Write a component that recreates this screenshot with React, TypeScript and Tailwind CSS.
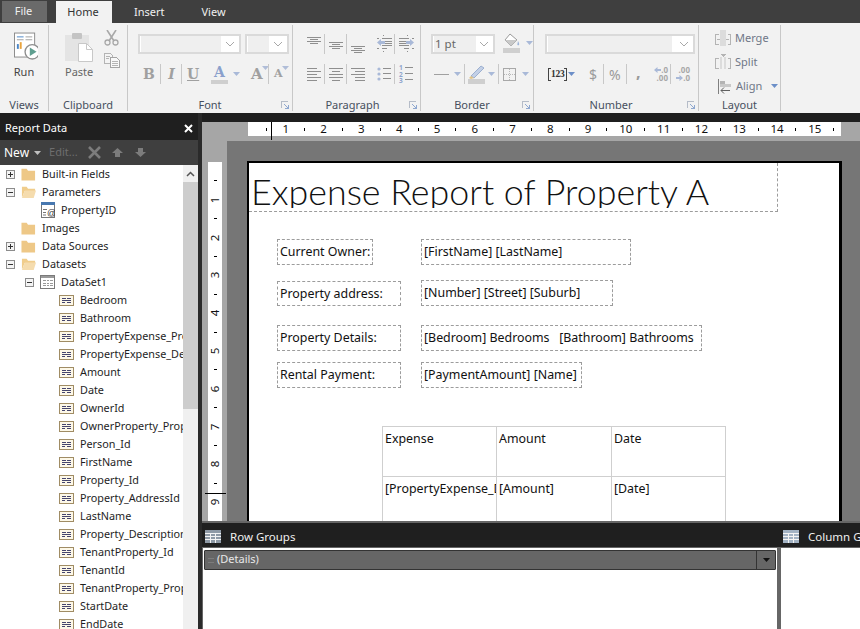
const fields = [
  "Bedroom",
  "Bathroom",
  "PropertyExpense_Property",
  "PropertyExpense_Description",
  "Amount",
  "Date",
  "OwnerId",
  "OwnerProperty_Property",
  "Person_Id",
  "FirstName",
  "Property_Id",
  "Property_AddressId",
  "LastName",
  "Property_Description",
  "TenantProperty_Id",
  "TenantId",
  "TenantProperty_Property",
  "StartDate",
  "EndDate",
];

const BLUE = "#a9b9d8";

// stacked 1px lines, used by the alignment / list buttons
function Lines({ rows, top, step = 2, w = 14 }: { rows: number[][]; top: number; step?: number; w?: number }) {
  return (
    <svg width={w} height={20} shapeRendering="crispEdges" className="shrink-0">
      {rows.map(([x, len], i) => (
        <rect key={i} x={x} y={top + i * step} width={len} height={1} fill="#8f8f8f" />
      ))}
    </svg>
  );
}

function Sep() {
  return <div className="w-px h-5 bg-[#c8c8c8] shrink-0" />;
}

function Caret({ color = BLUE }: { color?: string }) {
  return (
    <svg width={7} height={4} className="shrink-0">
      <path d="M0 0h7L3.5 4z" fill={color} />
    </svg>
  );
}

function Combo({ width, fill, children }: { width: string; fill: string; children?: React.ReactNode }) {
  return (
    <div className={`${width} h-5 shrink-0 bg-white border-2 border-[#dadada] flex items-center`}>
      <div className={`${fill} h-4 bg-[#efefef] ml-px text-[11.5px] leading-4 pl-px text-[#666]`}>{children}</div>
      <svg width={10} height={6} className="ml-auto mr-1 shrink-0">
        <path d="M1 1l4 4 4-4" fill="none" stroke="#a8a8a8" />
      </svg>
    </div>
  );
}

function Launcher() {
  return (
    <svg width={8} height={8} className="justify-self-end mr-[3px] self-center" shapeRendering="crispEdges">
      <path d="M0.5 7V0.5H7" fill="none" stroke="#b5bcc8" />
      <path d="M3 3l4 4M7 4v3H4" fill="none" stroke="#8fa8d0" />
    </svg>
  );
}

function Group({ width, label, labelPad = "", launcher, children }: { width: string; label: string; labelPad?: string; launcher?: boolean; children: React.ReactNode }) {
  return (
    <div className={`${width} shrink-0 my-[2px] border-r border-[#c8c8c8] flex flex-col`}>
      <div className="flex-1 min-h-0 pt-[9px]">{children}</div>
      <div className="grid grid-cols-[1fr_auto_1fr] h-[13px] text-[11px] leading-[13px] text-[#47505e]">
        <div />
        <div className={labelPad}>{label}</div>
        {launcher ? <Launcher /> : <div />}
      </div>
    </div>
  );
}

function RunIcon() {
  return (
    <svg width={24} height={28} viewBox="0 0 25 28" className="shrink-0">
      <rect x={0.5} y={0.5} width={21} height={25} fill="#fff" stroke="#8a8a8a" />
      <path d="M3 4.5h7" stroke="#4a86c8" />
      <path d="M3 7.5h7M12 4.5h7M12 7.5h7" stroke="#a0a0a0" />
      <rect x={3} y={12} width={2} height={5} fill="#4a86c8" />
      <rect x={6} y={10} width={2} height={7} fill="#e8a33d" />
      <circle cx={19} cy={20} r={7.5} fill="#fff" stroke="#8e8e8e" strokeWidth={1.4} />
      <path d="M16.5 15.5l7 4.5-7 4.5z" fill="#5f9f90" />
    </svg>
  );
}

function PasteIcon() {
  return (
    <svg width={29} height={30} viewBox="0 0 29 30" className="shrink-0">
      <rect x={0} y={3} width={24} height={26} fill="#e4e4e4" />
      <rect x={7} y={1} width={10} height={6} rx={1} fill="#c4c4c4" />
      <path d="M13.5 11.5h8l6 6v12h-14z" fill="#fff" stroke="#c8c8c8" />
      <path d="M21.5 11.5v6h6" fill="none" stroke="#c8c8c8" />
    </svg>
  );
}

function Scissors() {
  return (
    <svg width={15} height={16} viewBox="0 0 15 16" className="shrink-0">
      <path d="M3 0l7 11M12 0L5 11" stroke="#a8a8a8" strokeWidth={1.6} fill="none" />
      <circle cx={3.5} cy={12.5} r={2.5} fill="none" stroke="#a8a8a8" strokeWidth={1.3} />
      <circle cx={11.5} cy={12.5} r={2.5} fill="none" stroke="#a8a8a8" strokeWidth={1.3} />
    </svg>
  );
}

function CopyIcon() {
  return (
    <svg width={16} height={15} viewBox="0 0 16 15" className="shrink-0" shapeRendering="crispEdges">
      <path d="M0.5 0.5h6l2 2v8h-8z" fill="#f4f4f4" stroke="#b4b4b4" />
      <path d="M6.5 4.5h6l3 3v7h-9z" fill="#f8f8f8" stroke="#a4a4a4" />
      <path d="M2 3.5h4M2 5.5h3M8 8.5h6M8 10.5h6M8 12.5h6" stroke="#b4b4b4" />
    </svg>
  );
}

function FillIcon() {
  return (
    <svg width={17} height={20} viewBox="0 0 17 20" className="shrink-0">
      <path d="M7 1l7 6-6 6-6-6z" fill="#fff" stroke="#9a9a9a" />
      <path d="M2 7l6 6 6-6z" fill="#c9c9c9" />
      <path d="M15 8c1 2 1.6 3 1 4-.7.7-2 0-1.6-1z" fill="#9db4d8" />
      <rect x={0} y={15} width={17} height={5} fill="#cfcfcf" />
    </svg>
  );
}

function PenIcon() {
  return (
    <svg width={17} height={20} viewBox="0 0 17 20" className="shrink-0">
      <path d="M3 12L13 2l3 2L6 14z" fill="#c3d0e6" stroke="#9db0d0" />
      <path d="M1 14l2-2 3 2-3 1z" fill="#e2c486" />
      <rect x={0} y={15} width={17} height={5} fill="#cfcfcf" />
    </svg>
  );
}

function BoxIcon() {
  return (
    <svg width={13} height={13} viewBox="0 0 13 13" className="shrink-0" shapeRendering="crispEdges">
      <rect x={0.5} y={0.5} width={12} height={12} fill="none" stroke="#a8a8a8" />
      <path d="M6.5 1v11M1 6.5h11" stroke="#b8b8b8" strokeDasharray="1 1" />
    </svg>
  );
}

function IndentIcon({ flip }: { flip?: boolean }) {
  return (
    <svg width={16} height={20} viewBox="0 0 16 20" className="shrink-0" shapeRendering="crispEdges">
      <g transform={flip ? "translate(16 0) scale(-1 1)" : undefined}>
        <rect x={6} y={1} width={1} height={1} fill="#8f8f8f" />
        <rect x={6} y={17} width={1} height={1} fill="#8f8f8f" />
        <path d="M0 4h2v1H0zM5 4h10v1H5zM5 7h10v1H5zM5 9h10v1H5zM5 11h10v1H5zM0 14h2v1H0zM5 14h5v1H5z" fill="#8f8f8f" />
        <path d="M0 8.5L4 5v2h4v3H4v2z" fill={BLUE} shapeRendering="auto" />
      </g>
    </svg>
  );
}

function BulletIcon() {
  return (
    <svg width={14} height={20} viewBox="0 0 14 20" className="shrink-0">
      <circle cx={2} cy={5} r={1.6} fill={BLUE} />
      <circle cx={2} cy={10} r={1.6} fill={BLUE} />
      <circle cx={2} cy={15} r={1.6} fill={BLUE} />
      <path d="M6 4.5h8M6 9.5h8M6 14.5h8" stroke="#8f8f8f" />
    </svg>
  );
}

function NumberedIcon() {
  return (
    <div className="w-[14px] h-5 flex shrink-0">
      <div className="w-[5px] flex flex-col text-[6.5px] leading-[6.5px] text-[#8ea4cc] font-bold pt-[1px]">
        <span>1</span>
        <span>2</span>
        <span>3</span>
      </div>
      <svg width={9} height={20} className="shrink-0">
        <path d="M1 3.5h8M1 9.5h8M1 15.5h8" stroke="#8f8f8f" />
      </svg>
    </div>
  );
}

function MergeIcon({ split }: { split?: boolean }) {
  return (
    <svg width={16} height={16} viewBox="0 0 16 16" className="shrink-0" shapeRendering="crispEdges">
      <path d="M3.5 4.5h-3v10h3M12.5 4.5h3v10h-3" fill="none" stroke="#b4b4b4" />
      {split ? (
        <>
          <rect x={5} y={3} width={2} height={12} fill="#dcdcdc" />
          <rect x={9} y={3} width={2} height={12} fill="#dcdcdc" />
          <path d="M5 0h6L8 3z" fill="#b4b4b4" />
        </>
      ) : (
        <>
          <rect x={5} y={0} width={6} height={16} fill="#dcdcdc" />
          <path d="M2 9h3M11 9h3" stroke="#b4b4b4" />
        </>
      )}
    </svg>
  );
}

function AlignIcon() {
  return (
    <svg width={13} height={15} viewBox="0 0 13 15" className="shrink-0">
      <path d="M0.5 0v15" stroke="#808080" />
      <rect x={2} y={2} width={5} height={3} fill="#b4b4b4" />
      <rect x={2} y={5} width={11} height={3} fill="#c8c8c8" />
      <path d="M12 11.5H3M6 8.5l-3 3 3 3" fill="none" stroke="#606060" />
    </svg>
  );
}

function Bracket({ flip }: { flip?: boolean }) {
  return (
    <svg width={3} height={13} className="shrink-0" shapeRendering="crispEdges">
      <path d={flip ? "M0 0.5h2.5v12H0" : "M3 0.5H0.5v12H3"} fill="none" stroke="#444" />
    </svg>
  );
}

function DecimalIcon({ flip }: { flip?: boolean }) {
  const arrow = (
    <svg width={7} height={6} className="shrink-0">
      <path d={flip ? "M7 3L3.5 0v2H0v2h3.5v2z" : "M0 3l3.5-3v2H7v2H3.5v2z"} fill={BLUE} />
    </svg>
  );
  return (
    <div className="w-[15px] h-5 flex flex-col items-end justify-center text-[8px] leading-[8px] font-bold text-[#a8a8a8] shrink-0 whitespace-nowrap">
      {flip ? <span>.00</span> : <span className="flex items-center">{arrow}.0</span>}
      {flip ? <span className="flex items-center">{arrow}.0</span> : <span>.00</span>}
    </div>
  );
}

function Ribbon() {
  return (
    <div className="h-[90px] shrink-0 bg-[#f2f2f2] flex">
      <Group width="w-[49px]" label="Views">
        <div className="flex flex-col items-center -mt-[2px]">
          <div className="ml-[3px]"><RunIcon /></div>
          <div className="text-[11px] leading-[14px] mt-[5px] text-[#444]">Run</div>
        </div>
      </Group>
      <Group width="w-[79px]" label="Clipboard">
        <div className="flex -mt-[2px] pl-[16px]">
          <div className="flex flex-col items-start">
            <PasteIcon />
            <div className="text-[11px] leading-[14px] text-[#666] mt-[3px]">Paste</div>
          </div>
          <div className="flex flex-col ml-[10px] -mt-[2px] gap-[7px]">
            <Scissors />
            <CopyIcon />
          </div>
        </div>
      </Group>
      <Group width="w-[165px]" label="Font" launcher>
        <div className="pl-[10px]">
          <div className="flex gap-[4px]">
            <Combo width="w-[103px]" fill="w-[80px]" />
            <Combo width="w-[44px]" fill="w-[21px]" />
          </div>
          <div className="flex items-center h-5 mt-[10px] text-[#a0a0a0] font-bold text-[14px] leading-5 [font-family:'DejaVu_Serif',serif]">
            <span className="w-[11px] ml-[5px] text-center">B</span>
            <div className="ml-[6px]"><Sep /></div>
            <span className="w-[11px] ml-[5px] text-center italic">I</span>
            <div className="ml-[4px]"><Sep /></div>
            <span className="w-[11px] ml-[5px] text-center underline">U</span>
            <div className="flex flex-col items-center w-[17px] ml-[13px]">
              <span className="text-[14px] leading-[15px] text-[#8aa0cc]">A</span>
              <div className="w-[17px] h-[4px] bg-[#cfcfcf]" />
            </div>
            <div className="ml-[5px]"><Caret /></div>
            <span className="ml-[11px] w-[11px] text-center text-[15px]">A</span>
            <div className="-mt-[12px]"><Caret color="#b0bdd8" /></div>
            <div className="ml-[-1px] mr-[3px]"><Sep /></div>
            <span className="ml-[2px] w-[8px] text-center text-[11px]">A</span>
            <div className="-mt-[12px]"><Caret color="#b0bdd8" /></div>
          </div>
        </div>
      </Group>
      <Group width="w-[128px]" label="Paragraph" labelPad="pr-[8px]" launcher>
        <div className="flex ml-[14px]">
          <Lines top={3} rows={[[0, 14], [3, 8], [0, 14], [3, 8]]} />
          <div className="ml-[3px]"><Sep /></div>
          <div className="ml-[4px]"><Lines top={8} rows={[[0, 14], [3, 8], [0, 14], [3, 8]]} /></div>
          <div className="ml-[3px]"><Sep /></div>
          <div className="ml-[4px]"><Lines top={12} rows={[[0, 14], [3, 8], [0, 14], [3, 8]]} /></div>
          <div className="ml-[12px]"><IndentIcon /></div>
          <div className="ml-[1px]"><Sep /></div>
          <div className="ml-[3px]"><IndentIcon flip /></div>
        </div>
        <div className="flex ml-[14px] mt-[10px]">
          <Lines top={4} step={3} rows={[[0, 10], [0, 14], [0, 10], [0, 14], [0, 10]]} />
          <div className="ml-[3px]"><Sep /></div>
          <div className="ml-[4px]"><Lines top={4} step={3} rows={[[0, 14], [3, 8], [0, 14], [0, 14], [3, 8]]} /></div>
          <div className="ml-[3px]"><Sep /></div>
          <div className="ml-[4px]"><Lines top={4} step={3} rows={[[0, 14], [4, 10], [0, 14], [4, 10], [4, 10]]} /></div>
          <div className="ml-[12px]"><BulletIcon /></div>
          <div className="ml-[3px]"><Sep /></div>
          <div className="ml-[4px]"><NumberedIcon /></div>
        </div>
      </Group>
      <Group width="w-[113px]" label="Border" labelPad="pr-[10px]" launcher>
        <div className="pl-[10px] flex">
          <Combo width="w-[64px]" fill="w-[42px]">1 pt</Combo>
          <div className="ml-[8px] -mt-px"><FillIcon /></div>
          <div className="ml-[6px] mt-[7px]"><Caret /></div>
        </div>
        <div className="pl-[13px] mt-[10px] flex items-center h-5">
          <div className="w-[15px] h-px bg-[#a0a0a0]" />
          <div className="ml-[5px]"><Caret /></div>
          <div className="ml-[3px] mr-[3px]"><Sep /></div>
          <PenIcon />
          <div className="ml-[3px]"><Caret /></div>
          <div className="ml-[3px]"><Sep /></div>
          <div className="ml-[4px]"><BoxIcon /></div>
          <div className="ml-[6px]"><Caret /></div>
        </div>
      </Group>
      <Group width="w-[165px]" label="Number" labelPad="pr-[10px]" launcher>
        <div className="pl-[11px]">
          <Combo width="w-[150px]" fill="w-[124px]" />
          <div className="flex items-center h-5 mt-[10px] text-[#9a9a9a]">
            <div className="ml-[3px] w-[17px] flex items-center justify-between text-[9.5px] font-bold text-[#333] tracking-[-0.3px] [font-family:'Liberation_Serif',serif]">
              <Bracket />123<Bracket flip />
            </div>
            <div className="ml-[3px]"><Caret color="#6c8fc8" /></div>
            <span className="ml-[14px] w-[9px] text-[14px]">$</span>
            <div className="ml-[5px]"><Sep /></div>
            <span className="ml-[5px] w-[12px] text-[14px]">%</span>
            <div className="ml-[5px]"><Sep /></div>
            <span className="ml-[9px] w-[4px] text-[16px] font-bold leading-4 -mt-1">,</span>
            <div className="ml-[13px]"><DecimalIcon /></div>
            <div className="ml-[2px]"><Sep /></div>
            <div className="ml-[4px]"><DecimalIcon flip /></div>
          </div>
        </div>
      </Group>
      <Group width="w-[82px]" label="Layout">
        <div className="-mt-[4px] flex flex-col text-[11px] leading-4 text-[#6f7787]">
          <div className="flex items-center h-4 pl-[16px] gap-[4px]"><MergeIcon />Merge</div>
          <div className="flex items-center h-4 pl-[16px] gap-[4px] mt-[8px]"><MergeIcon split />Split</div>
          <div className="flex items-center h-4 pl-[19px] gap-[5px] mt-[8px]">
            <AlignIcon />Align
            <div className="ml-[4px]"><Caret color="#6c8fc8" /></div>
          </div>
        </div>
      </Group>
    </div>
  );
}

function Expander({ open }: { open: boolean }) {
  return (
    <svg width={9} height={9} shapeRendering="crispEdges" className="shrink-0">
      <rect x={0.5} y={0.5} width={8} height={8} fill="#f4f4f4" stroke="#8c8c8c" />
      <path d="M2 4.5h5" stroke="#333" />
      {!open && <path d="M4.5 2v5" stroke="#333" />}
    </svg>
  );
}

function Folder({ open }: { open?: boolean }) {
  return (
    <svg width={15} height={14} viewBox="0 0 16 14" className="shrink-0">
      {open ? (
        <>
          <path d="M1 13V1.5h5l1.5 2H15V6H4z" fill="#f0cd8c" />
          <path d="M1 13.5L4 5.5h12l-2.5 8z" fill="#f5dcae" />
        </>
      ) : (
        <path d="M0.5 14V1.5h5.5l1.5 2H15V14z" fill="#eec887" />
      )}
    </svg>
  );
}

function ParamIcon() {
  return (
    <svg width={14} height={16} viewBox="0 0 14 16" className="shrink-0">
      <rect x={0.5} y={0.5} width={13} height={15} fill="#fff" stroke="#777" />
      <rect x={0} y={0} width={14} height={3} fill="#4878b0" />
      <path d="M2 7.5h4M2 10.5h3M2 13h3" stroke="#777" />
      <text x={6} y={14} fontSize={9} fill="#333" fontFamily="'Liberation Sans', sans-serif">@</text>
    </svg>
  );
}

function DatasetIcon() {
  return (
    <svg width={15} height={14} viewBox="0 0 15 14" className="shrink-0" shapeRendering="crispEdges">
      <rect x={0.5} y={0.5} width={14} height={13} fill="#fff" stroke="#7a7a7a" />
      <rect x={1} y={1} width={13} height={2} fill="#9a9a9a" />
      <path d="M3 5.5h3M7 5.5h2M10 5.5h3M3 8h3M7 8h2M10 8h3M3 10.5h3M7 10.5h2M10 10.5h3" stroke="#9a9a9a" />
    </svg>
  );
}

function FieldIcon() {
  return (
    <svg width={15} height={11} viewBox="0 0 15 11" className="shrink-0" shapeRendering="crispEdges">
      <rect x={0.5} y={0.5} width={14} height={10} fill="#fdf8e8" stroke="#a08c64" />
      <path d="M3 3.5h4M8 3.5h4M3 5.5h9M3 7.5h3M8 7.5h4" stroke="#45456e" />
    </svg>
  );
}

function TreeRow({ pad, expander, gap, icon, label }: { pad: string; expander?: "open" | "closed"; gap: string; icon: React.ReactNode; label: string }) {
  return (
    <div className={`h-[18px] flex items-center ${pad} whitespace-nowrap`}>
      {expander ? <Expander open={expander === "open"} /> : null}
      <div className={`${gap} shrink-0 flex items-center`}>{icon}</div>
      <span className="ml-[6px] text-[10.8px] leading-[18px] text-[#1e1e1e]">{label}</span>
    </div>
  );
}

function ReportData() {
  return (
    <div className="w-[198px] shrink-0 flex flex-col">
      <div className="h-[27px] shrink-0 flex items-center justify-between pl-[5px] pr-[5px] pt-[4px] text-white text-[11px]">
        <span>Report Data</span>
        <svg width={9} height={9}>
          <path d="M1 1l7 7M8 1L1 8" stroke="#fff" strokeWidth={2} />
        </svg>
      </div>
      <div className="h-[25px] shrink-0 bg-[#3f3f3f] flex items-center pl-[4px] text-[12px]">
        <span className="text-white">New</span>
        <div className="ml-[5px]"><Caret color="#c0c0c0" /></div>
        <span className="ml-[8px] text-[#6e6e6e] text-[11px]">Edit...</span>
        <svg width={13} height={13} className="ml-[10px]">
          <path d="M1 1l11 11M12 1L1 12" stroke="#7c7c7c" strokeWidth={2.6} />
        </svg>
        <svg width={11} height={11} className="ml-[11px]">
          <path d="M5.5 1L11 6H8v4H3V6H0z" fill="#7c7c7c" />
        </svg>
        <svg width={11} height={11} className="ml-[12px]">
          <path d="M5.5 10L11 5H8V1H3v4H0z" fill="#7c7c7c" />
        </svg>
      </div>
      <div className="flex-1 min-h-0 flex bg-white overflow-hidden">
        <div className="w-[183px] shrink-0 overflow-hidden">
          <TreeRow pad="pl-[6px]" expander="closed" gap="ml-[6px]" icon={<Folder />} label="Built-in Fields" />
          <TreeRow pad="pl-[6px]" expander="open" gap="ml-[6px]" icon={<Folder open />} label="Parameters" />
          <TreeRow pad="pl-[41px]" gap="" icon={<ParamIcon />} label="PropertyID" />
          <TreeRow pad="pl-[21px]" gap="" icon={<Folder />} label="Images" />
          <TreeRow pad="pl-[6px]" expander="closed" gap="ml-[6px]" icon={<Folder />} label="Data Sources" />
          <TreeRow pad="pl-[6px]" expander="open" gap="ml-[6px]" icon={<Folder open />} label="Datasets" />
          <TreeRow pad="pl-[25px]" expander="open" gap="ml-[6px]" icon={<DatasetIcon />} label="DataSet1" />
          {fields.map((f) => (
            <TreeRow key={f} pad="pl-[59px]" gap="" icon={<FieldIcon />} label={f} />
          ))}
        </div>
        <div className="w-[15px] shrink-0 bg-[#f0f0f0] flex flex-col">
          <div className="h-[17px] flex items-center justify-center">
            <svg width={9} height={6}>
              <path d="M1 5l3.5-3.5L8 5" fill="none" stroke="#555" strokeWidth={1.5} />
            </svg>
          </div>
          <div className="h-[227px] bg-[#cdcdcd]" />
        </div>
      </div>
    </div>
  );
}

const rulerCells = Array.from({ length: 31 }, (_, i) => (i % 2 === 0 ? null : (i + 1) / 2));

function TopRuler() {
  return (
    <div className="w-[593px] h-[14px] bg-white flex pl-[9.5px] text-[11.5px] leading-[14px] text-[#111]">
      {rulerCells.map((n, i) => (
        <div key={i} className="w-[18.9px] shrink-0 flex items-center justify-center">
          {n === null ? <div className="w-px h-[3px] bg-black" /> : n}
        </div>
      ))}
    </div>
  );
}

function SideRuler() {
  return (
    <div className="w-[14px] flex-1 min-h-0 overflow-hidden bg-white flex flex-col pt-[9.5px] text-[11.5px] leading-[10px] text-[#111]">
      {rulerCells.slice(0, 18).map((n, i) => (
        <div key={i} className="h-[18.9px] shrink-0 flex items-center justify-center">
          {n === null ? <div className="w-[3px] h-px bg-black" /> : <span className="-rotate-90">{n}</span>}
        </div>
      ))}
    </div>
  );
}

function Box({ className, children }: { className: string; children: React.ReactNode }) {
  return (
    <div className={`absolute border border-dashed border-[#9c9c9c] pl-[2px] pt-[3px] text-[12.4px] leading-[18px] text-[#111] whitespace-pre ${className}`}>
      {children}
    </div>
  );
}

function ReportPage() {
  return (
    <div className="relative w-[595px] flex-1 bg-white border-t-2 border-l-2 border-r-[3px] border-black overflow-hidden [font-family:'Noto_Sans',sans-serif]">
      <div className="absolute left-0 top-0 w-[529px] h-[49px] border-r border-b border-dashed border-[#9c9c9c]">
        <div className="h-[45px] overflow-hidden pl-[2px]">
          <div className="text-[35.8px] leading-[58px] font-light text-[#111] whitespace-nowrap [font-family:'Lato',sans-serif]">Expense Report of Property A</div>
        </div>
      </div>
      <Box className="left-[28px] top-[76px] w-[96px] h-[26px]">Current Owner:</Box>
      <Box className="left-[172px] top-[76px] w-[210px] h-[26px]">[FirstName] [LastName]</Box>
      <Box className="left-[28px] top-[118px] w-[124px] h-[25px]">Property address:</Box>
      <Box className="left-[172px] top-[117px] w-[192px] h-[26px]">[Number] [Street] [Suburb]</Box>
      <Box className="left-[28px] top-[162px] w-[124px] h-[26px]">Property Details:</Box>
      <Box className="left-[172px] top-[162px] w-[281px] h-[26px]">{"[Bedroom] Bedrooms   [Bathroom] Bathrooms"}</Box>
      <Box className="left-[28px] top-[199px] w-[124px] h-[26px]">Rental Payment:</Box>
      <Box className="left-[172px] top-[199px] w-[161px] h-[26px]">[PaymentAmount] [Name]</Box>
      <div className="absolute left-[133px] top-[263px] w-[344px] grid grid-cols-[114px_115px_114px] grid-rows-[50px_50px] border-l border-t border-[#cfcfcf] text-[12.4px] leading-[18px] text-[#111]">
        {["Expense", "Amount", "Date", "[PropertyExpense_Description]", "[Amount]", "[Date]"].map((t) => (
          <div key={t} className="border-r border-b border-[#cfcfcf] pl-[2px] pt-[3px] overflow-hidden whitespace-nowrap">{t}</div>
        ))}
      </div>
    </div>
  );
}

function TableIcon({ tint }: { tint: string }) {
  return (
    <svg width={16} height={13} viewBox="0 0 16 13" shapeRendering="crispEdges" className="shrink-0">
      <rect width={16} height={13} fill={tint} />
      <path d="M0 3.5h16M0 6.5h16M0 9.5h16M5.5 3v10M10.5 3v10" stroke="#f4f4f4" />
    </svg>
  );
}

export default function App() {
  return (
    <div className="relative w-[860px] h-[629px] overflow-hidden flex flex-col bg-[#1f1f1f] text-[12px] [font-family:'Noto_Sans',sans-serif]">
      {/* title tabs */}
      <div className="h-[23px] shrink-0 bg-[#3f3f3f] flex items-end text-[11px] text-[#f0f0f0]">
        <div className="w-[45px] h-[21px] mb-px ml-[2px] pr-[2px] bg-[#6a6a6a] flex items-center justify-center">File</div>
        <div className="w-[56px] h-[22px] ml-[9px] pr-[2px] bg-[#f2f2f2] text-[#333] flex items-center justify-center">Home</div>
        <div className="ml-[22px] h-[22px] flex items-center">Insert</div>
        <div className="ml-[37px] h-[22px] flex items-center">View</div>
      </div>
      <Ribbon />
      <div className="flex-1 min-h-0 flex">
        <ReportData />
        <div className="w-[4px] shrink-0 bg-[#2a2a2a]" />
        <div className="flex-1 min-w-0 flex flex-col">
          <div className="h-[9px] shrink-0" />
          {/* design surface */}
          <div className="relative h-[399px] shrink-0 bg-[#a6a6a6] flex flex-col overflow-hidden">
            <div className="h-[19px] shrink-0 pl-[46px]">
              <TopRuler />
            </div>
            <div className="flex-1 min-h-0 flex">
              <div className="w-[25px] shrink-0 pl-[6px] pt-[21px] flex flex-col">
                <SideRuler />
              </div>
              <div className="flex-1 min-w-0 bg-[#767676] pl-[20px] pt-[20px] flex flex-col">
                <ReportPage />
              </div>
            </div>
            <div className="absolute left-[69px] top-0 w-px h-[18px] bg-black" />
            <div className="absolute left-[3px] top-[371px] w-[21px] h-px bg-black" />
          </div>
          {/* grouping pane */}
          <div className="h-[2px] shrink-0 bg-[#666]" />
          <div className="h-[24px] shrink-0 flex items-center pt-[3px] text-[11.5px] text-[#f0f0f0]">
            <div className="w-[576px] shrink-0 flex items-center pl-[3px] gap-[9px]">
              <TableIcon tint="#8f9aa6" />
              Row Groups
            </div>
            <div className="flex items-center pl-[5px] gap-[9px] whitespace-nowrap">
              <TableIcon tint="#a3b3c4" />
              Column Groups
            </div>
          </div>
          <div className="flex-1 min-h-0 flex bg-[#666] pt-px">
            <div className="w-[574px] shrink-0 bg-white ml-px pt-[2px] pl-[1px] pr-[1px]">
              <div className="h-[20px] bg-[#666] border border-[#333] rounded-[1px] flex items-center pl-[3px] text-[11px] text-[#e8e8e8]">
                <div className="w-[6px] h-[5px] border-y border-[#7c7c7c] mr-[3px]" />
                <span className="-mt-px">(Details)</span>
                <div className="ml-auto w-[19px] h-full border-l border-[#333] flex items-center justify-center">
                  <Caret color="#111" />
                </div>
              </div>
            </div>
            <div className="ml-[4px] flex-1 bg-white" />
          </div>
        </div>
      </div>
    </div>
  );
}
